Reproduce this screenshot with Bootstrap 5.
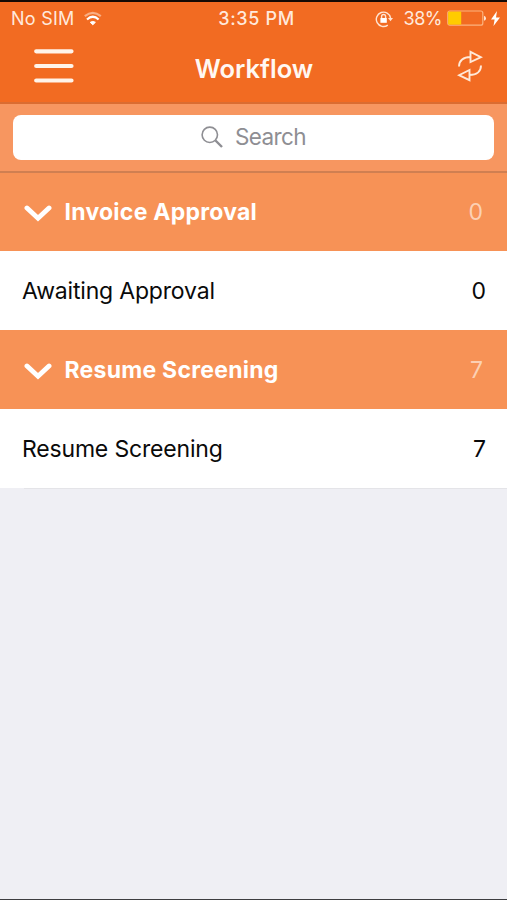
<!DOCTYPE html>
<html lang="en">
<head>
<meta charset="utf-8">
<meta name="viewport" content="width=device-width, initial-scale=1">
<title>Workflow</title>
<link href="https://cdn.jsdelivr.net/npm/bootstrap@5.3.0/dist/css/bootstrap.min.css" rel="stylesheet">
<style>
  body { background: #efeff4; font-family: Inter, "Liberation Sans", sans-serif; height: 900px; overflow: hidden; border-top: 2px solid #160a04; border-bottom: 1px solid #3d3d40; }
  svg { display: block; flex: none; }
  .top-area { background: #f26b22; height: 102px; border-bottom: 2px solid #da6c31; }
  .status-bar { height: 32px; font-size: 18px; line-height: 32px; color: #ffe9dc; padding: 2px 7px 0 11px; }
  .status-side { flex: 1 1 0; }
  .carrier { letter-spacing: .25px; }
  .clock { font-weight: 500; letter-spacing: .65px; margin-left: 2px; }
  .battery-level { letter-spacing: -.5px; margin: 0 5px 0 11px; }
  .bolt { margin-left: 5px; }
  .title-bar { height: 68px; padding: 0 24px 4px 34px; }
  .side-slot { flex: 1 1 0; }
  .screen-title { font-size: 25.500px; font-weight: 600; line-height: 30px; color: #fff8f2; letter-spacing: 0; padding-top: 5px; margin-right: 9px; }
  .search-strip { background: #f79660; height: 69px; padding: 11px 13px 12px; border-bottom: 2px solid #d07f51; }
  .search-box { height: 45px; background: #fff; border-radius: 8px; color: #8e8e93; font-size: 22.500px; gap: 12px; letter-spacing: -.6px; padding-bottom: 1px; }
  .section-head { background: #f79256; height: 79px; color: #fff; padding: 2px 24px 0; }
  .section-head:first-child { height: 78px; padding-top: 1px; }
  .section-name { font-size: 23px; font-weight: 700; margin-left: 12.500px; letter-spacing: .25px; }
  .section-count { font-size: 23px; color: #fcd0b4; }
  .entry { background: #fff; height: 79px; color: #0a0a0a; font-size: 23px; padding: 2px 21px 0 22px; }
  .entry-name { letter-spacing: -.18px; }
  .list-end { height: 1px; background: #e4e4e8; margin-left: 24px; }
</style>
<script src="https://cdn.jsdelivr.net/npm/bootstrap@5.3.0/dist/js/bootstrap.bundle.min.js"></script>
</head>
<body>
<header class="top-area">
  <div class="status-bar d-flex align-items-center">
    <div class="status-side d-flex align-items-center">
      <span class="carrier">No SIM</span>
      <svg class="ms-2" width="21" height="16" viewBox="0 0 21 16" fill="none" stroke-width="2.200"><path d="M1.800 5.200Q9.800-1.600 17.800 5.200" stroke="#f9ae83"/><path d="M4 8.500Q9.800 3 15.600 8.500" stroke="#fff"/><path d="M7.200 11.300Q9.800 9.500 12.400 11.300L9.800 13.800Z" fill="#fff" stroke="#fff" stroke-width="1"/></svg>
    </div>
    <span class="clock">3:35 PM</span>
    <div class="status-side d-flex align-items-center justify-content-end">
      <svg width="18" height="18" viewBox="0 0 18 18" fill="none" stroke="#ffe4d2" stroke-width="1.400"><path d="M12.800 15.100A7.200 7.200 0 1 1 15.600 8"/><path d="M13 8h5l-2.500 3.200Z" fill="#ffe4d2" stroke="none"/><rect x="5.400" y="8" width="6.400" height="4.800" fill="#fff" stroke="none"/><path d="M6.600 8V6.500a2 2 0 0 1 4 0V8"/></svg>
      <span class="battery-level">38%</span>
      <svg width="39" height="18" viewBox="0 0 39 18"><rect x=".8" y="1" width="35" height="14.200" rx="2" fill="none" stroke="#fbb37f" stroke-width="1.200"/><rect x="1.200" y="1.600" width="13" height="13" fill="#ffcc00"/><path d="M37 5.700q2 .5 2 2.500t-2 2.500Z" fill="#ffe4d2"/></svg>
      <svg class="bolt" width="9" height="16" viewBox="0 0 9 16"><path d="M6 0 0 8.500h3.600L2.500 15 9 6.500H5Z" fill="#fff"/></svg>
    </div>
  </div>
  <div class="title-bar d-flex align-items-center">
    <div class="side-slot"><svg width="40" height="34" viewBox="0 0 40 34" stroke="#fff4ea" stroke-width="4.200" stroke-linecap="round"><path d="M2.200 2.300H37.500M2.200 17H37.500M2.200 31.500H37.500"/></svg></div>
    <h1 class="screen-title mb-0">Workflow</h1>
    <div class="side-slot d-flex justify-content-end"><svg width="26" height="32" viewBox="0 0 26 32" fill="none" stroke="#ffe9d8" stroke-width="1.900"><path d="M2 16.500C2 10.500 6.500 7 13.500 7M13.500 1.800V12L24 7.200ZM24 15.500C24 21.500 19.500 25 12.500 25M12.500 20V30.200L2 25.200Z"/></svg></div>
  </div>
</header>
<div class="search-strip">
  <div class="search-box d-flex align-items-center justify-content-center">
    <svg width="22" height="22" viewBox="0 0 22 22" fill="none" stroke="#8e8e93"><circle cx="8.800" cy="8.800" r="7.700" stroke-width="1.600"/><path d="M14.500 14.500 21 21" stroke-width="2.400"/></svg>
    <span>Search</span>
  </div>
</div>
<main>
  <div class="section-head d-flex align-items-center">
    <svg width="28" height="18" viewBox="0 0 28 18" fill="none" stroke="#fff" stroke-width="4.900" stroke-linecap="round"><path d="M3 4 14 14.200 25 4"/></svg>
    <span class="section-name">Invoice Approval</span><span class="section-count ms-auto">0</span>
  </div>
  <div class="entry d-flex align-items-center justify-content-between"><span class="entry-name">Awaiting Approval</span><span>0</span></div>
  <div class="section-head d-flex align-items-center">
    <svg width="28" height="18" viewBox="0 0 28 18" fill="none" stroke="#fff" stroke-width="4.900" stroke-linecap="round"><path d="M3 4 14 14.200 25 4"/></svg>
    <span class="section-name">Resume Screening</span><span class="section-count ms-auto">7</span>
  </div>
  <div class="entry d-flex align-items-center justify-content-between"><span class="entry-name">Resume Screening</span><span>7</span></div>
  <div class="list-end"></div>
</main>
</body>
</html>
